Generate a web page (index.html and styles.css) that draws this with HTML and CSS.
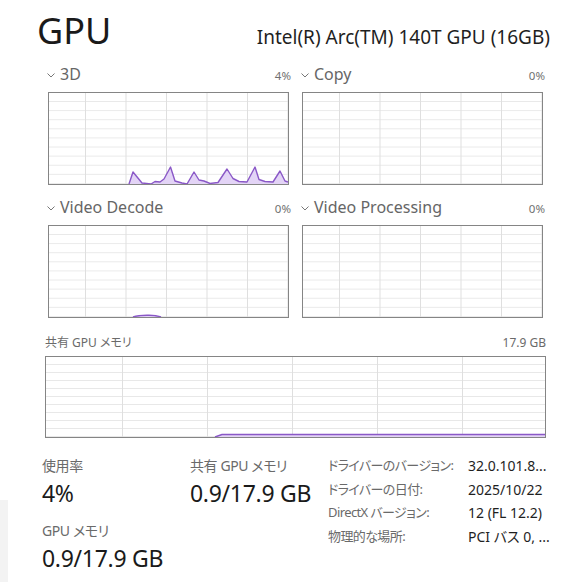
FILE: index.html
```html
<!DOCTYPE html>
<html lang="ja">
<head>
<meta charset="utf-8">
<title>GPU</title>
<link rel="stylesheet" href="styles.css">
</head>
<body>
<div class="page">
  <aside class="sidebar">
    <div class="sidebar-spacer"></div>
    <div class="sidebar-panel"></div>
  </aside>
  <main class="main">
    <header class="header">
      <h1 class="title">GPU</h1>
      <div class="device">Intel(R) Arc(TM) 140T GPU (16GB)</div>
    </header>

    <section class="engines">
      <div class="engine">
        <div class="engine-head">
          <span class="engine-name"><svg class="chev" width="8" height="5" viewBox="0 0 8 5"><polyline points="0.5,0.5 4,4 7.5,0.5"/></svg>3D</span>
          <span class="engine-pct">4%</span>
        </div>
        <div class="chart chart-small">
          <svg class="plot" width="239" height="91" viewBox="0 0 239 91">
            <path class="area" d="M80,91 L84,79 L93,90 L102,91 L106,88.5 L111,89 L115,86 L121.5,74 L126,88 L133,90 L138,91 L145,79 L150,87 L155,88 L161,90.5 L169,89.5 L178,76 L184,85.5 L190,88.5 L198,89 L206,74 L210,86.5 L216,88.5 L224,89 L231,78 L236,88 L239,89 L239,91 Z"/>
            <path class="line" d="M80,91 L84,79 L93,90 L102,91 L106,88.5 L111,89 L115,86 L121.5,74 L126,88 L133,90 L138,91 L145,79 L150,87 L155,88 L161,90.5 L169,89.5 L178,76 L184,85.5 L190,88.5 L198,89 L206,74 L210,86.5 L216,88.5 L224,89 L231,78 L236,88 L239,89"/>
          </svg>
        </div>
      </div>

      <div class="engine">
        <div class="engine-head">
          <span class="engine-name"><svg class="chev" width="8" height="5" viewBox="0 0 8 5"><polyline points="0.5,0.5 4,4 7.5,0.5"/></svg>Copy</span>
          <span class="engine-pct">0%</span>
        </div>
        <div class="chart chart-small"></div>
      </div>

      <div class="engine">
        <div class="engine-head">
          <span class="engine-name"><svg class="chev" width="8" height="5" viewBox="0 0 8 5"><polyline points="0.5,0.5 4,4 7.5,0.5"/></svg>Video Decode</span>
          <span class="engine-pct">0%</span>
        </div>
        <div class="chart chart-small">
          <svg class="plot" width="239" height="91" viewBox="0 0 239 91">
            <path class="area" d="M84,91 C89,89.3 95,89.2 100,89.3 C106,89.4 109,90 112,91 Z"/>
            <path class="line" d="M84,91 C89,89.3 95,89.2 100,89.3 C106,89.4 109,90 112,91"/>
          </svg>
        </div>
      </div>

      <div class="engine">
        <div class="engine-head">
          <span class="engine-name"><svg class="chev" width="8" height="5" viewBox="0 0 8 5"><polyline points="0.5,0.5 4,4 7.5,0.5"/></svg>Video Processing</span>
          <span class="engine-pct">0%</span>
        </div>
        <div class="chart chart-small"></div>
      </div>
    </section>

    <section class="shared">
      <div class="shared-head">
        <span>共有 GPU メモリ</span>
        <span>17.9 GB</span>
      </div>
      <div class="chart chart-wide">
        <svg class="plot" width="499" height="80" viewBox="0 0 499 80">
          <path class="area" d="M169,80 L176,77.5 L499,77.5 L499,80 Z"/>
          <path class="line" d="M169,80 L176,77.5 L499,77.5"/>
        </svg>
      </div>
    </section>

    <section class="stats">
      <div class="stat-grid">
        <div class="stat">
          <div class="stat-label">使用率</div>
          <div class="stat-value">4%</div>
        </div>
        <div class="stat">
          <div class="stat-label">共有 GPU メモリ</div>
          <div class="stat-value">0.9/17.9 GB</div>
        </div>
        <div class="stat">
          <div class="stat-label">GPU メモリ</div>
          <div class="stat-value">0.9/17.9 GB</div>
        </div>
      </div>
      <dl class="props">
        <dt>ドライバーのバージョン:</dt><dd>32.0.101.8...</dd>
        <dt>ドライバーの日付:</dt><dd>2025/10/22</dd>
        <dt>DirectX バージョン:</dt><dd>12 (FL 12.2)</dd>
        <dt>物理的な場所:</dt><dd>PCI バス 0, ...</dd>
      </dl>
    </section>
  </main>
</div>
</body>
</html>
```

FILE: styles.css
```css
html, body {
  margin: 0;
  padding: 0;
  background: #ffffff;
}

body {
  font-family: "Noto Sans", "Noto Sans CJK JP", sans-serif;
  font-feature-settings: "palt";
  color: #1a1a1a;
  width: 569px;
  height: 582px;
  overflow: hidden;
}

.page {
  display: flex;
  min-height: 582px;
}

.sidebar {
  width: 8px;
  flex: none;
  display: flex;
  flex-direction: column;
}

.sidebar-spacer {
  height: 500px;
  flex: none;
}

.sidebar-panel {
  flex: 1;
  background: #f3f3f3;
}

.main {
  flex: 1;
  min-width: 0;
}

/* Header */
.header {
  display: flex;
  justify-content: space-between;
  align-items: baseline;
  padding: 11px 19px 0 29px;
}

.title {
  margin: 0;
  font-size: 36px;
  font-weight: 400;
  line-height: 40px;
  color: #1a1a1a;
}

.device {
  font-size: 19px;
  line-height: 40px;
  color: #1f1f1f;
}

/* Engine graphs */
.engines {
  display: grid;
  grid-template-columns: 245px 245px;
  column-gap: 9px;
  row-gap: 11px;
  margin-top: 6px;
  padding-left: 38px;
}

.engine-head {
  display: flex;
  justify-content: space-between;
  align-items: baseline;
  height: 22px;
  line-height: 22px;
  margin-bottom: 7px;
}

.engine-name {
  font-size: 16px;
  color: #666666;
  white-space: nowrap;
}

.chev {
  vertical-align: middle;
  margin: 0 5px 0 1px;
  fill: none;
  stroke: #777777;
  stroke-width: 1;
}

.engine-pct {
  font-size: 11.5px;
  color: #707070;
}

.chart {
  box-sizing: border-box;
  border: 1px solid #858585;
  background-color: #ffffff;
  background-origin: border-box;
  overflow: hidden;
}

.chart-small {
  width: 241px;
  height: 93px;
  margin-left: 2px;
  background-image:
    linear-gradient(to right, #dfdfdf 1px, transparent 1px),
    linear-gradient(to bottom, #e8e8e8 1px, transparent 1px);
  background-size: 40.5px 100%, 100% 9.1px;
  background-position: 37px 0, 0 0;
}

.plot {
  display: block;
}

.plot .area {
  fill: #e3d4f6;
  stroke: none;
}

.plot .line {
  fill: none;
  stroke: #8a58c7;
  stroke-width: 1.4;
  stroke-linejoin: round;
}

/* Shared memory */
.shared {
  margin-top: 17px;
  padding: 0 23px 0 37px;
}

.shared-head {
  display: flex;
  justify-content: space-between;
  font-size: 12px;
  line-height: 16px;
  color: #6a6a6a;
  margin-bottom: 5px;
}

.chart-wide {
  height: 82px;
  background-image:
    linear-gradient(to right, #dfdfdf 1px, transparent 1px),
    linear-gradient(to bottom, #e8e8e8 1px, transparent 1px);
  background-size: 85px 100%, 100% 8px;
  background-position: 77px 0, 0 0;
}

/* Stats */
.stats {
  display: flex;
  align-items: flex-start;
  margin-top: 18px;
  padding-left: 34px;
}

.stat-grid {
  display: grid;
  grid-template-columns: 148px 138px;
  row-gap: 11px;
  flex: none;
}

.stat-label {
  font-size: 14px;
  line-height: 20px;
  letter-spacing: -0.4px;
  color: #6a6a6a;
  white-space: nowrap;
}

.stat-value {
  font-size: 23px;
  line-height: 34px;
  letter-spacing: -0.3px;
  color: #1a1a1a;
  white-space: nowrap;
}

.props {
  display: grid;
  grid-template-columns: 140px auto;
  margin: -2px 0 0 0;
  font-size: 14px;
  line-height: 23.5px;
}

.props dt {
  font-size: 13px;
  letter-spacing: -0.6px;
  color: #6a6a6a;
  white-space: nowrap;
}

.props dd {
  margin: 0;
  color: #1f1f1f;
  white-space: nowrap;
}
```
